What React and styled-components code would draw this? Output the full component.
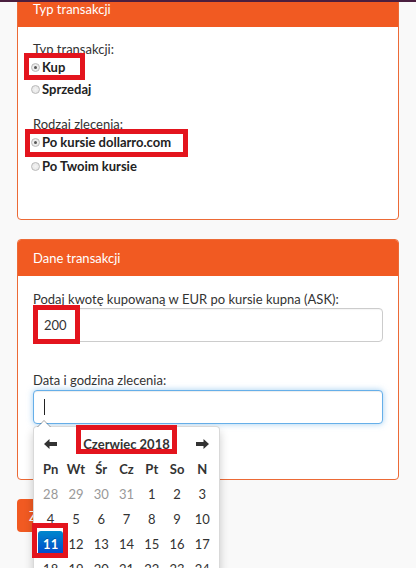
import React from "react";
import styled, { createGlobalStyle, css } from "styled-components";

const GlobalStyle = createGlobalStyle`
  html, body { margin: 0; padding: 0; background: #f9f9f9; }
  body { font-family: Lato, "Open Sans", "Liberation Sans", sans-serif; font-size: 13px; color: #333; }
  * { box-sizing: border-box; }
`;

const ORANGE = "#f15a22";
const RED = "#e3141d";

const Page = styled.div`
  position: relative;
  height: 568px;
  overflow: hidden;
  background: #f9f9f9;
`;

const TopEdge = styled.div`
  position: absolute;
  top: 0;
  left: 0;
  right: 0;
  height: 2px;
  background: #4b1f3f;
  z-index: 10;
`;

const Content = styled.div`
  margin-top: -10px;
  padding: 0 17px;
  display: flex;
  flex-direction: column;
  align-items: flex-start;
  gap: 19px;
`;

const Panel = styled.section`
  width: 382px;
  background: #fff;
  border: 1px solid #ec6a36;
  border-radius: 4px;
`;

const PanelHeading = styled.h3`
  margin: 0;
  height: 36px;
  padding: 0 15px;
  display: flex;
  align-items: center;
  background: ${ORANGE};
  color: #fff;
  font-size: 13px;
  font-weight: 400;
  border-radius: 3px 3px 0 0;
`;

const PanelBody = styled.div`
  padding: ${(p) => p.$top}px 15px ${(p) => p.$bottom}px;
  display: flex;
  flex-direction: column;
`;

const Group = styled.div`
  display: flex;
  flex-direction: column;
  margin-bottom: ${(p) => p.$mb || 0}px;
  position: relative;
`;

const Options = styled.div`
  display: flex;
  flex-direction: column;
  gap: ${(p) => p.$gap}px;
`;

const Label = styled.div`
  line-height: 17px;
  height: 17px;
  color: #333;
  margin-bottom: ${(p) => p.$mb || 0}px;
`;

const RadioRow = styled.label`
  display: flex;
  align-items: center;
  height: 18px;
  font-weight: 700;
  color: #222;
`;

const Radio = styled.span`
  width: 9px;
  height: 9px;
  margin: 0 2px 0 -2px;
  border-radius: 50%;
  border: 1px solid #b9b9b9;
  background: radial-gradient(circle, #f4f4f4 0, #e2e2e2 100%);
  display: inline-flex;
  align-items: center;
  justify-content: center;
  &::after {
    content: "";
    width: 3px;
    height: 3px;
    border-radius: 50%;
    background: ${(p) => (p.$checked ? "#555" : "transparent")};
  }
`;

const Marked = styled.span`
  position: relative;
  display: inline-flex;
  align-items: center;
  &::after {
    content: "";
    position: absolute;
    top: ${(p) => p.$t}px;
    right: ${(p) => p.$r}px;
    bottom: ${(p) => p.$b}px;
    left: ${(p) => p.$l}px;
    border: 5px solid ${RED};
    pointer-events: none;
    z-index: 4;
  }
`;

const fieldBase = css`
  width: 350px;
  height: 34px;
  border: 1px solid #ccc;
  border-radius: 4px;
  background: #fff;
  font: inherit;
  font-size: 13px;
  color: #333;
`;

const TextInput = styled.input`
  ${fieldBase};
  padding: 0 10px;
  outline: none;
  box-shadow: inset 0 1px 1px rgba(0, 0, 0, 0.04);
`;

const FocusField = styled.div`
  ${fieldBase};
  border-color: #66afe9;
  box-shadow: inset 0 1px 1px rgba(0, 0, 0, 0.075), 0 0 6px rgba(102, 175, 233, 0.6);
  display: flex;
  align-items: center;
  padding-left: 10px;
`;

const Caret = styled.span`
  width: 1px;
  height: 16px;
  background: #222;
`;

const Value = styled.span`
  line-height: 18px;
`;

const SubmitButton = styled.button`
  height: 33px;
  padding: 0 12px;
  border: 0;
  border-radius: 4px;
  background: ${ORANGE};
  color: #fff;
  font: inherit;
  font-size: 13px;
`;

const Picker = styled.div`
  position: absolute;
  top: 100%;
  left: 0;
  margin-top: 2px;
  width: 187px;
  padding: 4px;
  background: #fff;
  border: 1px solid rgba(0, 0, 0, 0.15);
  border-radius: 4px;
  box-shadow: 0 5px 10px rgba(0, 0, 0, 0.2);
  z-index: 3;
  &::before {
    content: "";
    position: absolute;
    top: -7px;
    left: 3px;
    border-left: 7px solid transparent;
    border-right: 7px solid transparent;
    border-bottom: 7px solid rgba(0, 0, 0, 0.35);
  }
  &::after {
    content: "";
    position: absolute;
    top: -6px;
    left: 4px;
    border-left: 6px solid transparent;
    border-right: 6px solid transparent;
    border-bottom: 6px solid #fff;
  }
`;

const Grid = styled.div`
  display: grid;
  grid-template-columns: repeat(7, 1fr);
  grid-auto-rows: 25px;
`;

const Cell = styled.div`
  display: flex;
  align-items: center;
  justify-content: center;
  grid-column: ${(p) => (p.$span ? `span ${p.$span}` : "auto")};
  font-weight: ${(p) => (p.$bold ? 700 : 400)};
  color: #333;
  font-size: 13px;
`;

const Day = styled.div`
  display: flex;
  align-items: center;
  justify-content: center;
  color: ${(p) => (p.$muted ? "#999" : "#333")};
  font-size: 13px;
  ${(p) =>
    p.$active &&
    css`
      width: 100%;
      height: 100%;
      background: linear-gradient(to bottom, #0088cc, #0044cc);
      color: #fff;
      font-weight: 700;
      border-radius: 3px;
      text-shadow: 0 -1px 0 rgba(0, 0, 0, 0.25);
    `}
`;

const Arrow = ({ dir }) => (
  <svg width="13" height="10" viewBox="0 0 13 10" aria-hidden="true">
    <path
      d="M0 5 L5.5 0 V3 H13 V7 H5.5 V10 Z"
      fill="#333"
      transform={dir === "right" ? "matrix(-1 0 0 1 13 0)" : undefined}
    />
  </svg>
);

const days = [
  [28, 1], [29, 1], [30, 1], [31, 1], [1], [2], [3],
  [4], [5], [6], [7], [8], [9], [10],
  [11, 0, 1], [12], [13], [14], [15], [16], [17],
  [18], [19], [20], [21], [22], [23], [24],
];

export default function App() {
  return (
    <>
      <GlobalStyle />
      <Page>
        <TopEdge />
        <Content>
          <Panel>
            <PanelHeading>Typ transakcji</PanelHeading>
            <PanelBody $top={14} $bottom={44}>
              <Group $mb={18}>
                <Label>Typ transakcji:</Label>
                <Options $gap={4}>
                  <RadioRow>
                    <Marked $t={-6} $r={-20} $b={-5} $l={-9}>
                      <Radio $checked />Kup
                    </Marked>
                  </RadioRow>
                  <RadioRow>
                    <Radio />Sprzedaj
                  </RadioRow>
                </Options>
              </Group>
              <Group>
                <Label>Rodzaj zlecenia:</Label>
                <Options $gap={6}>
                  <RadioRow>
                    <Marked $t={-5} $r={-17} $b={-7} $l={-8}>
                      <Radio $checked />Po kursie dollarro.com
                    </Marked>
                  </RadioRow>
                  <RadioRow>
                    <Radio />Po Twoim kursie
                  </RadioRow>
                </Options>
              </Group>
            </PanelBody>
          </Panel>

          <Panel>
            <PanelHeading>Dane transakcji</PanelHeading>
            <PanelBody $top={15} $bottom={55}>
              <Group $mb={30}>
                <Label>Podaj kwotę kupowaną w EUR po kursie kupna (ASK):</Label>
                <Marked $t={-3} $r={303} $b={-2} $l={0}>
                  <TextInput defaultValue="200" readOnly />
                </Marked>
              </Group>
              <Group>
                <Label $mb={1}>Data i godzina zlecenia:</Label>
                <FocusField>
                  <Caret />
                </FocusField>
                <Picker>
                  <Grid>
                    <Cell><Arrow dir="left" /></Cell>
                    <Cell $span={5} $bold>
                      <Marked $t={-10} $r={-7} $b={-1} $l={-7}>
                        <Value>Czerwiec 2018</Value>
                      </Marked>
                    </Cell>
                    <Cell><Arrow dir="right" /></Cell>
                    {["Pn", "Wt", "Śr", "Cz", "Pt", "So", "N"].map((d) => (
                      <Cell key={d} $bold>{d}</Cell>
                    ))}
                    {days.map(([n, muted, active]) =>
                      active ? (
                        <Marked key={n} $t={-8} $r={-5} $b={-2} $l={-6}>
                          <Day $active>{n}</Day>
                        </Marked>
                      ) : (
                        <Day key={`${n}-${muted ? "o" : "c"}`} $muted={muted}>{n}</Day>
                      )
                    )}
                  </Grid>
                </Picker>
              </Group>
            </PanelBody>
          </Panel>

          <SubmitButton>Zatwierdź</SubmitButton>
        </Content>
      </Page>
    </>
  );
}
